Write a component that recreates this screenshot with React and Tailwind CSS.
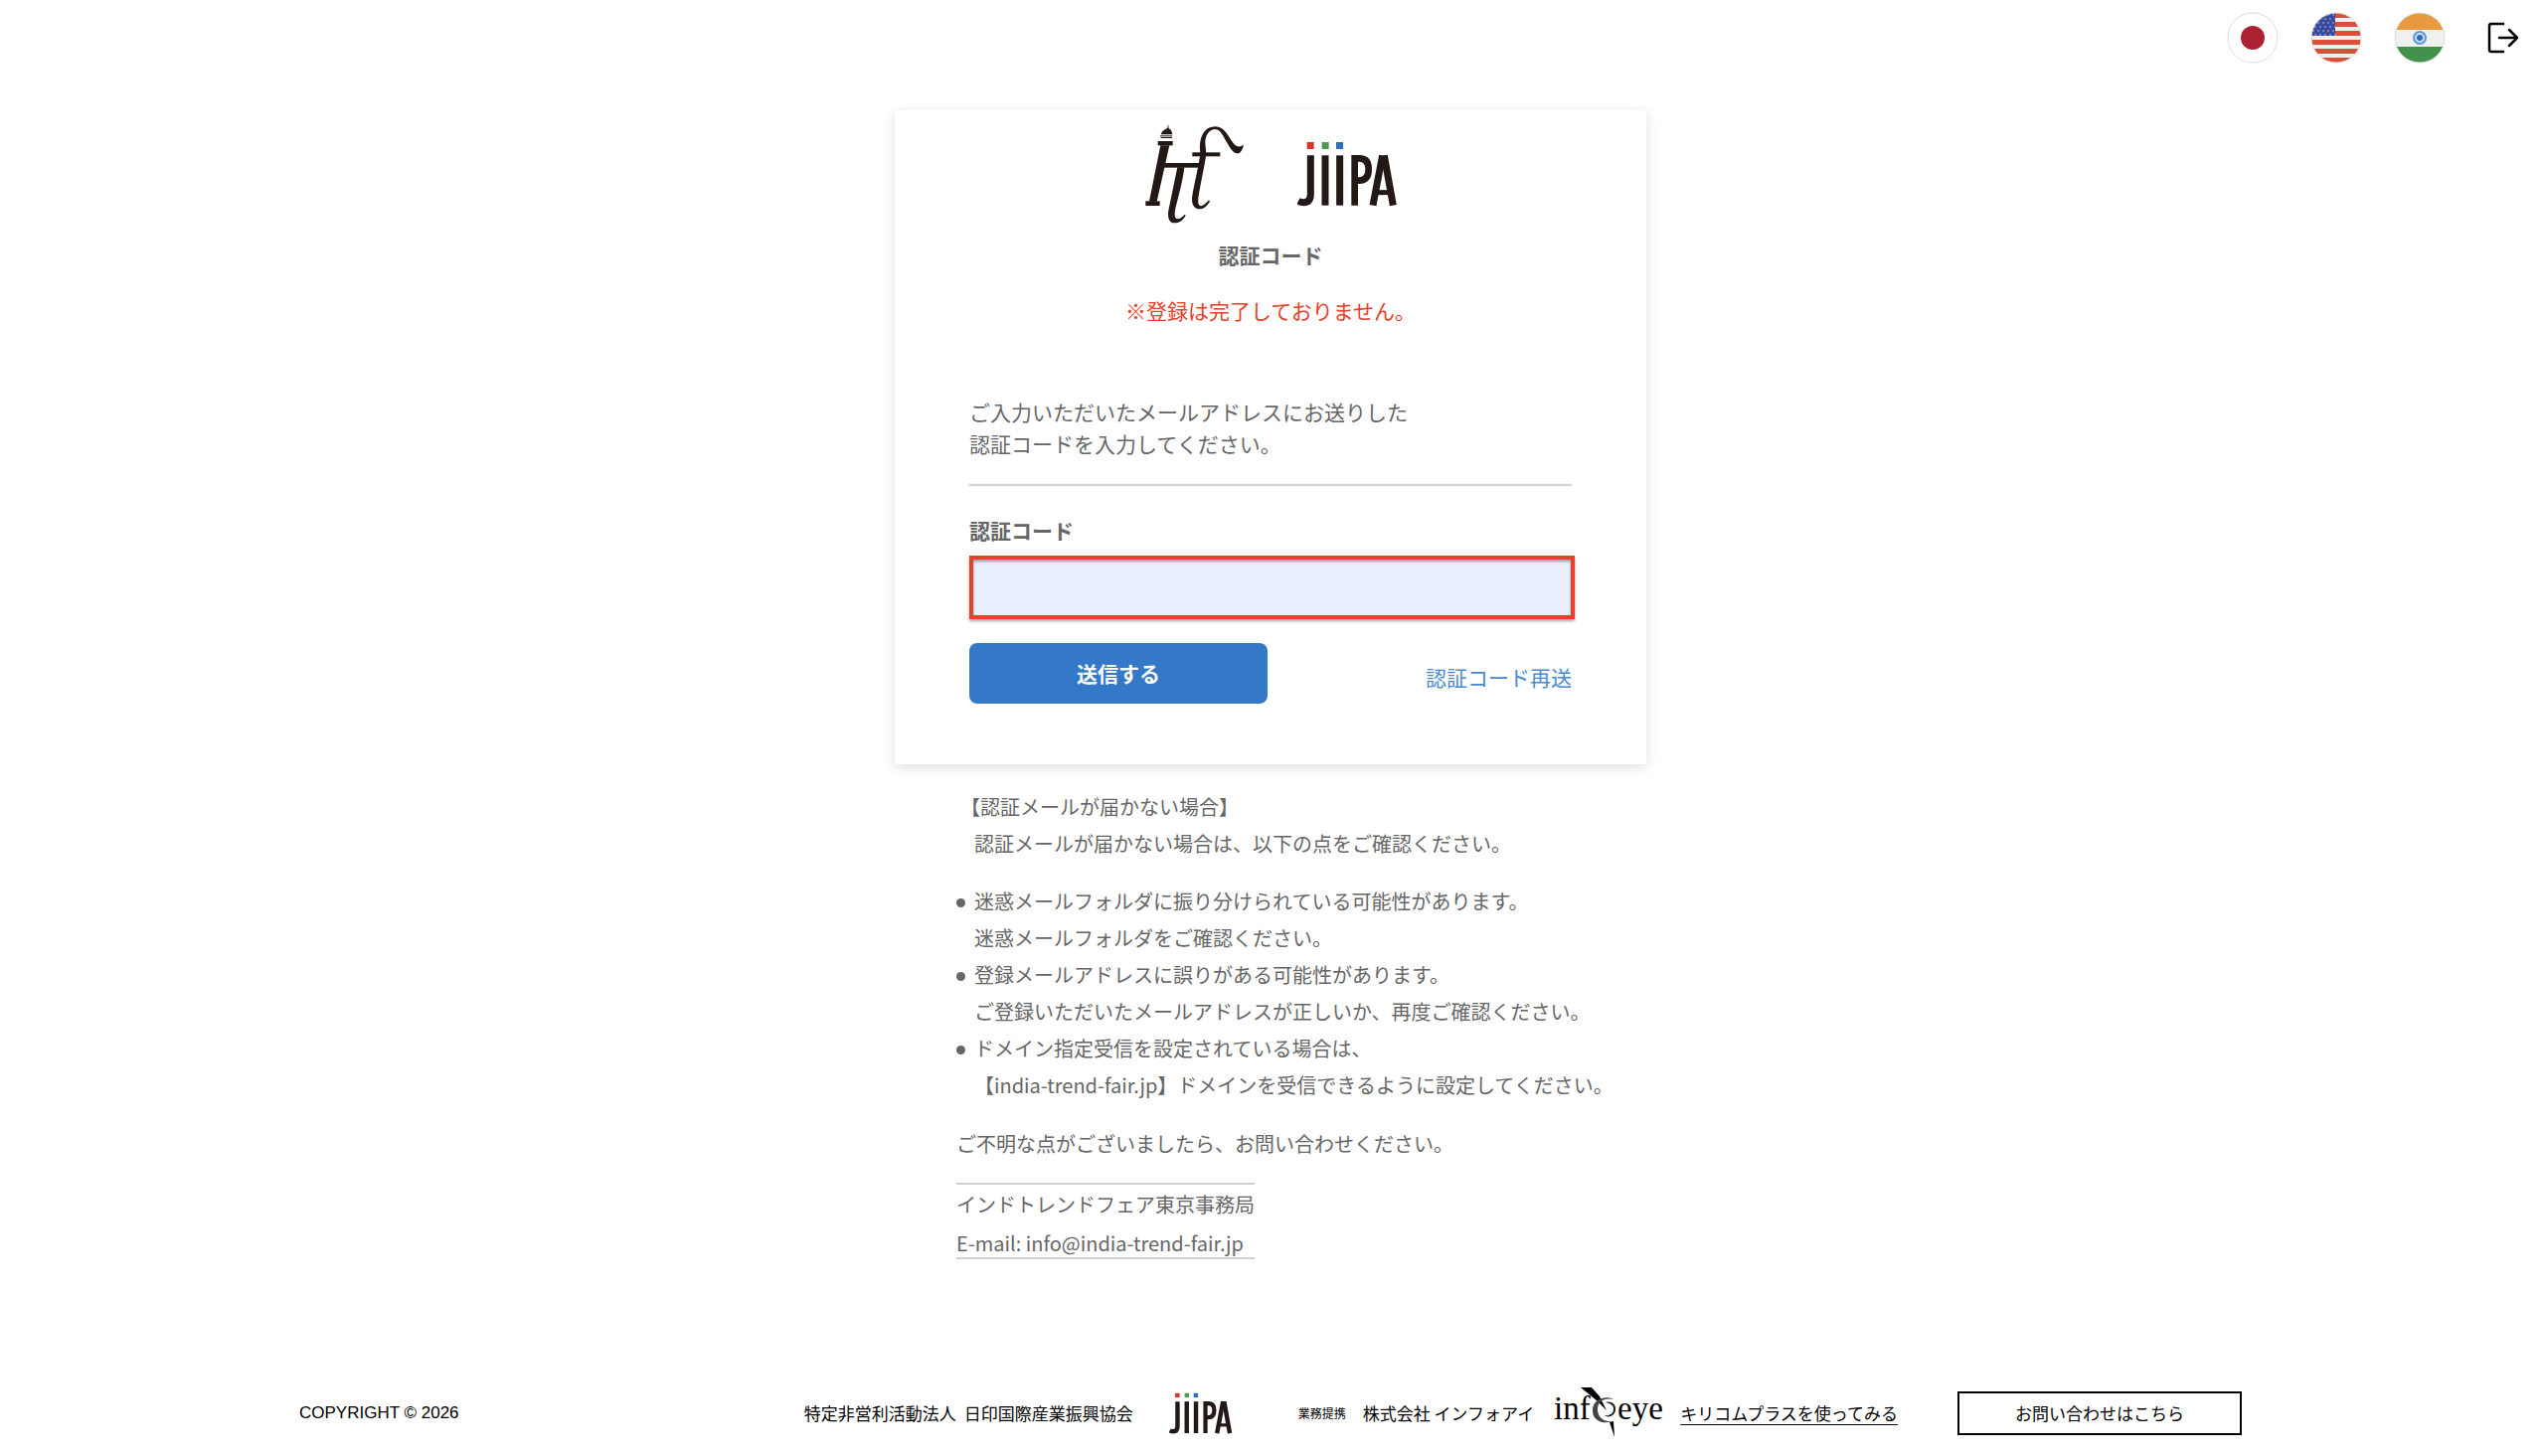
import React from "react";

function ItfLogo({ className }) {
  return (
    <svg className={className} viewBox="34 32 303 303" fill="#231815" role="img" aria-label="India Trend Fair">
      <path d="M106 34 L108 47 Q118 54 119 66 H84 Q87 54 104 47 Z" />
      <rect x="82" y="69" width="36" height="3" />
      <rect x="84" y="74" width="34" height="3" />
      <rect x="75" y="86" width="45" height="13" />
      <path d="M83 99 H110 L72 268 H49 Z" />
      <rect x="38" y="267" width="43" height="14" />
      <rect x="92" y="152" width="122" height="14" />
      <path d="M134 165 H155 C149 220 127 284 126 305 C125 327 141 325 156 307 L159 310 C149 328 138 333 126 333 C108 333 104 316 107 295 Z" />
      <rect x="179" y="120" width="84" height="12" />
      <path d="M334 97 C330 115 322 124 314 123 C300 122 292 104 281 86 C268 62 262 50 246 50 C228 52 218 70 218 90 C218 104 222 115 220 132 C215 165 199 240 197 262 C195 287 209 288 229 264 L232 268 C222 284 212 291 201 291 C184 291 175 275 179 250 C184 220 196 170 202 132 C204 118 201 112 202 96 C205 62 221 43 248 42 C275 42 287 70 301 90 C309 102 319 107 334 97 Z" />
    </svg>
  );
}

function JiipaLogo({ className }) {
  return (
    <svg className={className} viewBox="493 84 303 198" role="img" aria-label="JIIPA">
      <rect x="522" y="87" width="21" height="21" fill="#d8352a" />
      <rect x="567" y="87" width="21" height="21" fill="#4a9c50" />
      <rect x="610" y="87" width="21" height="21" fill="#2f6ebf" />
      <g fill="none" stroke="#231815" strokeWidth="21">
        <path d="M533 127 V244 Q533 269 513 269 Q503 269 496 265" />
        <path d="M577 127 V278" />
        <path d="M621 127 V278" />
        <path d="M666 278 V136 H680 Q708 136 708 169 Q708 203 680 203 H666" strokeWidth="20" />
        <path d="M721 278 L750 127" />
        <path d="M782 278 L755 127" />
        <path d="M728 239 H776" strokeWidth="15" />
      </g>
    </svg>
  );
}

function InfoeyeLogo() {
  return (
    <svg className="h-[54px] w-[110px] shrink-0" viewBox="0 0 110 54" role="img" aria-label="infoeye">
      <text x="0" y="33" fontFamily="'Liberation Serif', serif" fontSize="33" fill="#000">inf</text>
      <text x="64" y="33" fontFamily="'Liberation Serif', serif" fontSize="33" fill="#000">eye</text>
      <path d="M27 1 H38 L46 10 L53 24 L44 15 Z" fill="#000" />
      <path d="M60 13 C53 9 40 12 39 23 C38 34 49 39 59 35 C50 36 44 31 44 23 C44 15 51 11 60 13 Z" fill="#444" />
      <path d="M52 16 C59 14 63 19 62 24 C61 30 55 32 50 29 C55 30 60 28 60 23 C60 19 57 17 52 16 Z" fill="#222" />
      <path d="M56 36 L60 35 L61 51 Z" fill="#000" />
    </svg>
  );
}

function FlagButton({ label, children }) {
  return (
    <button type="button" aria-label={label} className="h-[52px] w-[52px] shrink-0 cursor-pointer">
      <svg viewBox="0 0 52 52" className="h-full w-full" aria-hidden="true">
        <defs>
          <clipPath id={"clip-" + label}>
            <circle cx="26" cy="26" r="25" />
          </clipPath>
        </defs>
        <g clipPath={"url(#clip-" + label + ")"}>{children}</g>
        <circle cx="26" cy="26" r="25" fill="none" stroke="#dedede" strokeWidth="1" />
      </svg>
    </button>
  );
}

const stars = [];
for (let row = 0; row < 6; row++) {
  for (let col = 0; col < 5; col++) {
    stars.push([3 + col * 5 + (row % 2) * 2, 3 + row * 4]);
  }
}

function Header() {
  return (
    <header className="flex h-[76px] items-center justify-end gap-8 pr-[26px]">
      <FlagButton label="日本語">
        <rect width="52" height="52" fill="#fff" />
        <circle cx="26" cy="26" r="12" fill="#ad2232" />
      </FlagButton>
      <FlagButton label="English">
        <rect width="52" height="52" fill="#efefef" />
        {[1, 10, 19, 28, 37, 46].map((y) => (
          <rect key={y} y={y} width="52" height="5" fill="#d94f3a" />
        ))}
        <rect width="25" height="24" fill="#3a4a9f" />
        {stars.map(([x, y]) => (
          <circle key={x + "-" + y} cx={x} cy={y} r="0.8" fill="#c3cae6" />
        ))}
      </FlagButton>
      <FlagButton label="हिन्दी">
        <rect width="52" height="52" fill="#f0f0f0" />
        <rect width="52" height="18" fill="#e9993f" />
        <rect y="35" width="52" height="17" fill="#43924c" />
        <circle cx="26" cy="26" r="6" fill="#c9dbee" stroke="#5b9bdc" strokeWidth="2" />
        <circle cx="26" cy="26" r="3" fill="#2b6cc0" />
      </FlagButton>
      <button type="button" aria-label="ログアウト" className="ml-2.5 cursor-pointer">
        <svg
          className="h-8 w-8"
          viewBox="0 0 32 32"
          fill="none"
          stroke="#000"
          strokeWidth="2.5"
          strokeLinecap="round"
          strokeLinejoin="round"
          aria-hidden="true"
        >
          <path d="M16 2 H4 Q2 2 2 4 V28 Q2 30 4 30 H16" />
          <path d="M12 16 H30 M22 8 L30 16 L22 24" />
        </svg>
      </button>
    </header>
  );
}

function AuthCard() {
  return (
    <section className="w-full max-w-[756px] bg-white px-[75px] pt-[14px] pb-[61px] shadow-[0_3px_12px_rgba(0,0,0,0.13)]">
      <div className="flex h-[99px] items-center justify-center gap-[53px]">
        <ItfLogo className="h-[101px] w-[101px]" />
        <JiipaLogo className="h-[66px] w-[101px]" />
      </div>
      <h1 className="mt-4 text-center text-[21px] leading-8 font-bold">認証コード</h1>
      <p className="mt-6 text-center text-[21px] leading-8 text-[#e8402a]">※登録は完了しておりません。</p>
      <p className="mt-[70px] border-b-2 border-[#d3d3d3] pb-[25px] text-[21px] leading-8">
        ご入力いただいたメールアドレスにお送りした
        <br />
        認証コードを入力してください。
      </p>
      <form onSubmit={(e) => e.preventDefault()}>
        <label htmlFor="code" className="mt-7 block text-[21px] leading-8 font-bold">
          認証コード
        </label>
        <input
          id="code"
          type="text"
          className="mt-[10px] block h-16 w-[calc(100%+3px)] border-4 border-[#e8402a] bg-[#e8f0fe] px-3 text-[21px] shadow-[0_2px_3px_rgba(0,0,0,0.35),inset_0_2px_3px_rgba(0,0,0,0.35)] outline-none"
        />
        <div className="mt-6 flex items-center justify-between">
          <button
            type="submit"
            className="h-[61px] w-[300px] cursor-pointer rounded-lg bg-[#3478c8] text-[21px] font-bold text-white"
          >
            送信する
          </button>
          <a href="#resend" className="pt-1.5 text-[21px] leading-8 text-[#4a8ad0]">
            認証コード再送
          </a>
        </div>
      </form>
    </section>
  );
}

const checks = [
  ["迷惑メールフォルダに振り分けられている可能性があります。", "迷惑メールフォルダをご確認ください。"],
  ["登録メールアドレスに誤りがある可能性があります。", "ご登録いただいたメールアドレスが正しいか、再度ご確認ください。"],
  ["ドメイン指定受信を設定されている場合は、", "【india-trend-fair.jp】ドメインを受信できるように設定してください。"],
];

function Help() {
  return (
    <section className="mt-6 w-full max-w-[756px] pl-[62px] text-[20px] leading-[37px]">
      <h2 className="pl-1">【認証メールが届かない場合】</h2>
      <p className="pl-[18px]">認証メールが届かない場合は、以下の点をご確認ください。</p>
      <ul className="mt-[21px]">
        {checks.map(([first, second]) => (
          <li key={first} className="flex">
            <span className="mt-4 mr-[9px] h-[9px] w-[9px] shrink-0 rounded-full bg-[#666]" />
            <span className="whitespace-nowrap">
              {first}
              <br />
              {second}
            </span>
          </li>
        ))}
      </ul>
      <p className="mt-[22px]">ご不明な点がございましたら、お問い合わせください。</p>
      <address className="mt-[21px] h-[77px] w-fit border-y-2 border-[#d0d0d0] leading-[39px] not-italic">
        インドトレンドフェア東京事務局
        <br />
        E-mail: info@india-trend-fair.jp
      </address>
    </section>
  );
}

function Footer() {
  return (
    <footer className="mt-auto flex w-full justify-center pr-1 pb-[21px] text-[17px] text-black">
      <div className="flex h-11 w-full max-w-[1954px] items-center justify-between">
        <small className="font-['Liberation_Sans',sans-serif] text-[17px]">COPYRIGHT © 2026</small>
        <div className="flex items-center whitespace-nowrap">
          <span className="flex gap-2">
            <span>特定非営利活動法人</span>
            <span>日印国際産業振興協会</span>
          </span>
          <JiipaLogo className="ml-9 h-[42px] w-[64px]" />
          <span className="ml-[66px] text-[12px]">業務提携</span>
          <span className="ml-[17px]">株式会社 インフォアイ</span>
          <span className="ml-5">
            <InfoeyeLogo />
          </span>
          <a href="#kiricom" className="ml-[17px] underline underline-offset-4">
            キリコムプラスを使ってみる
          </a>
          <a
            href="#contact"
            className="ml-[60px] flex h-11 w-[286px] items-center justify-center border-2 border-black"
          >
            お問い合わせはこちら
          </a>
        </div>
      </div>
    </footer>
  );
}

export default function App() {
  return (
    <div className="flex min-h-screen flex-col bg-white font-['Noto_Sans_CJK_JP',sans-serif] text-[#666]">
      <Header />
      <main className="mt-[35px] flex flex-col items-center pr-1 pb-10">
        <AuthCard />
        <Help />
      </main>
      <Footer />
    </div>
  );
}
